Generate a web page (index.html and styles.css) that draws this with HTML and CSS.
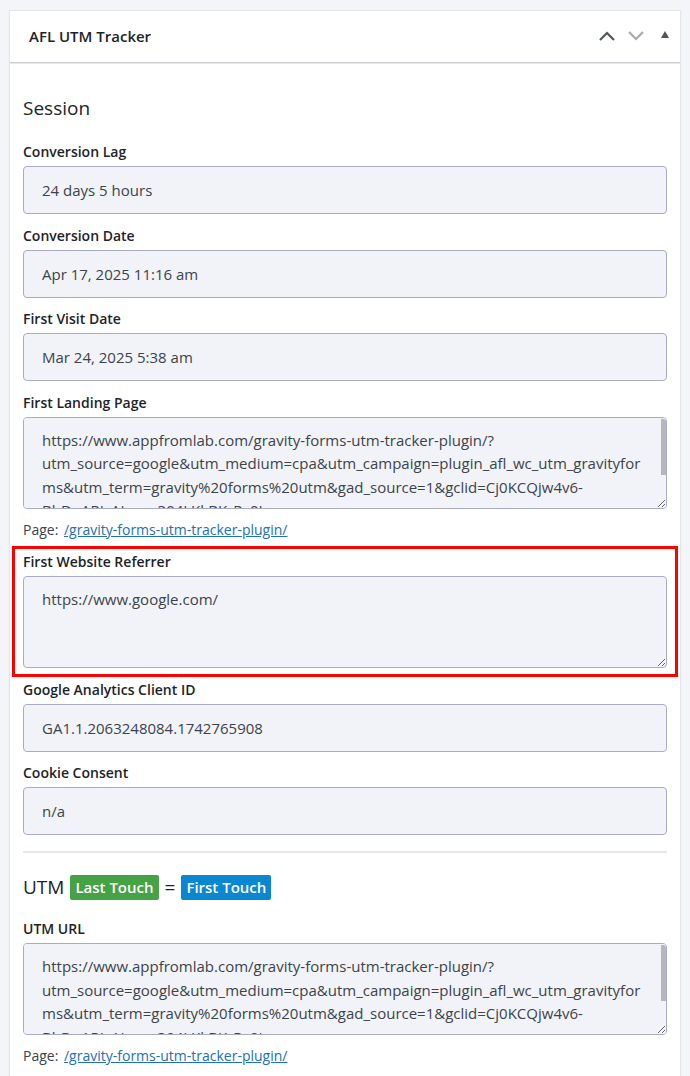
FILE: index.html
```html
<!DOCTYPE html>
<html lang="en">
<head>
    <meta charset="UTF-8">
    <meta name="viewport" content="width=device-width, initial-scale=1.0">
    <title>AFL UTM Tracker</title>
    <link rel="stylesheet" href="styles.css">
</head>
<body>
    <div class="postbox">
        <div class="postbox-header">
            <h2 class="hndle">AFL UTM Tracker</h2>
            <div class="handle-actions">
                <button class="handle-order higher" aria-label="Move up">
                    <svg width="18" height="12" viewBox="0 0 18 12"><path d="M2 10 L9 3 L16 10" fill="none" stroke="currentColor" stroke-width="2.2"/></svg>
                </button>
                <button class="handle-order lower" aria-label="Move down">
                    <svg width="18" height="12" viewBox="0 0 18 12"><path d="M2 2 L9 9 L16 2" fill="none" stroke="currentColor" stroke-width="2.2"/></svg>
                </button>
                <button class="handlediv" aria-label="Toggle panel">
                    <span class="toggle-indicator"></span>
                </button>
            </div>
        </div>

        <div class="inside">
            <h3 class="section-title">Session</h3>

            <div class="field">
                <label for="conversionLag">Conversion Lag</label>
                <input type="text" id="conversionLag" readonly value="24 days 5 hours">
            </div>

            <div class="field">
                <label for="conversionDate">Conversion Date</label>
                <input type="text" id="conversionDate" readonly value="Apr 17, 2025 11:16 am">
            </div>

            <div class="field">
                <label for="firstVisitDate">First Visit Date</label>
                <input type="text" id="firstVisitDate" readonly value="Mar 24, 2025 5:38 am">
            </div>

            <div class="field has-page">
                <label for="firstLandingPage">First Landing Page</label>
                <div class="scroll-wrap">
                    <textarea id="firstLandingPage" readonly>https://www.appfromlab.com/gravity-forms-utm-tracker-plugin/?utm_source=google&amp;utm_medium=cpa&amp;utm_campaign=plugin_afl_wc_utm_gravityforms&amp;utm_term=gravity%20forms%20utm&amp;gad_source=1&amp;gclid=Cj0KCQjw4v6-BhDuARIsALprm304LKkBKrRy0Iq-R5kV3mQwYtH2xZpLdN8aEhcQFq7sXnDk0JvGw9TzLbYcRm2PeWsAaHnfEALw_wcB</textarea>
                </div>
                <p class="page-link">Page: <a href="#">/gravity-forms-utm-tracker-plugin/</a></p>
            </div>

            <div class="highlight">
                <div class="field">
                    <label for="firstReferrer">First Website Referrer</label>
                    <textarea id="firstReferrer" readonly>https://www.google.com/</textarea>
                </div>
            </div>

            <div class="field">
                <label for="gaClientId">Google Analytics Client ID</label>
                <input type="text" id="gaClientId" readonly value="GA1.1.2063248084.1742765908">
            </div>

            <div class="field">
                <label for="cookieConsent">Cookie Consent</label>
                <input type="text" id="cookieConsent" readonly value="n/a">
            </div>

            <hr class="divider">

            <h3 class="section-title utm-title">
                UTM <span class="badge last">Last Touch</span> <span class="equals">=</span> <span class="badge first">First Touch</span>
            </h3>

            <div class="field has-page">
                <label for="utmUrl">UTM URL</label>
                <div class="scroll-wrap">
                    <textarea id="utmUrl" readonly>https://www.appfromlab.com/gravity-forms-utm-tracker-plugin/?utm_source=google&amp;utm_medium=cpa&amp;utm_campaign=plugin_afl_wc_utm_gravityforms&amp;utm_term=gravity%20forms%20utm&amp;gad_source=1&amp;gclid=Cj0KCQjw4v6-BhDuARIsALprm304LKkBKrRy0Iq-R5kV3mQwYtH2xZpLdN8aEhcQFq7sXnDk0JvGw9TzLbYcRm2PeWsAaHnfEALw_wcB</textarea>
                </div>
                <p class="page-link">Page: <a href="#">/gravity-forms-utm-tracker-plugin/</a></p>
            </div>
        </div>
    </div>
</body>
</html>
```

FILE: styles.css
```css
body {
    font-family: "Open Sans", "Noto Sans", sans-serif;
    margin: 0;
    padding: 10px 9px 0;
    background: #f3f5f9;
    color: #1d2327;
}

.postbox {
    background: #fff;
    border: 1px solid #e2e5ea;
    box-shadow: 0 1px 2px rgba(0, 0, 0, 0.04);
    min-height: 1100px;
}

.postbox-header {
    display: flex;
    align-items: center;
    justify-content: space-between;
    height: 51px;
    padding: 0 6px 0 19px;
    border-bottom: 1px solid #c9cbd0;
    box-shadow: 0 1px 0 #e8e9ec;
}

.hndle {
    margin: 0 0 1px;
    font-size: 15px;
    font-weight: 600;
    color: #1d2327;
}

.handle-actions {
    display: flex;
    align-items: center;
    gap: 11px;
    margin-bottom: 2px;
}

.handle-actions button {
    background: none;
    border: none;
    padding: 0;
    cursor: pointer;
    display: flex;
    align-items: center;
}

.handle-order.higher {
    color: #50575e;
}

.handle-order.lower {
    color: #a7aaad;
}

.handlediv {
    width: 18px;
    height: 12px;
    justify-content: center;
}

.toggle-indicator {
    width: 0;
    height: 0;
    border-left: 4px solid transparent;
    border-right: 4px solid transparent;
    border-bottom: 7px solid #50575e;
    margin-top: -3px;
}

.inside {
    padding: 31px 13px 0;
}

.section-title {
    margin: 0 0 20px;
    font-size: 19px;
    font-weight: 500;
    line-height: 28px;
    color: #1d2327;
}

.field {
    margin-bottom: 11.5px;
}

.field.has-page {
    margin-bottom: 6px;
}

label {
    display: block;
    font-size: 14px;
    font-weight: 600;
    line-height: 20px;
    margin-bottom: 4px;
    color: #1d2327;
}

input, textarea {
    display: block;
    width: 100%;
    box-sizing: border-box;
    font-family: inherit;
    font-size: 15px;
    color: #3c434a;
    background: #f2f3f8;
    border: 1px solid #a9aac8;
    border-radius: 4px;
    margin: 0;
}

input {
    height: 48px;
    padding: 0 18px;
}

textarea {
    height: 92px;
    padding: 11px 15px 8px 18px;
    line-height: 23.5px;
    resize: vertical;
}

/* thin grey thumb shown on the long url boxes */
.scroll-wrap {
    position: relative;
}

.scroll-wrap::after {
    content: "";
    position: absolute;
    top: 2px;
    right: 1px;
    width: 5px;
    height: 56px;
    background: #b6b6bb;
    border-radius: 0 3px 0 0;
}

.page-link {
    margin: 11px 0 0;
    font-size: 14px;
    line-height: 20px;
    color: #3c434a;
}

.page-link a {
    color: #2271b1;
    margin-left: 2px;
}

.highlight {
    margin: 0 -11px 3px;
    padding: 3px 8px 6px;
    border: 3px solid #ff0000;
}

.highlight .field {
    margin-bottom: 0;
}

.divider {
    border: none;
    border-top: 2px solid #e6e7ea;
    margin: 16px 0 20px;
}

.utm-title {
    margin-bottom: 18px;
    font-size: 19px;
    font-weight: 400;
    display: flex;
    align-items: center;
    gap: 6px;
}

.badge {
    display: inline-block;
    color: #fff;
    font-size: 15px;
    font-weight: 600;
    line-height: 25px;
    padding: 0 5px;
    border-radius: 2px;
}

.badge.last {
    background: #45a245;
}

.badge.first {
    background: #0b87d1;
}
```
